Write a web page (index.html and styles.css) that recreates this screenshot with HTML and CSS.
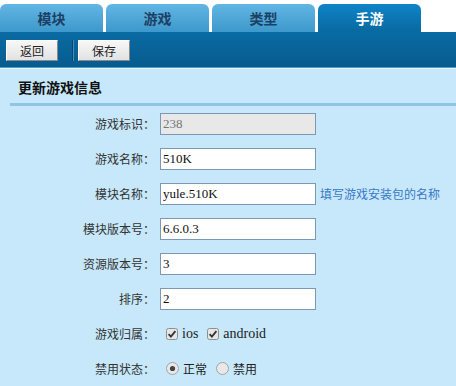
FILE: index.html
```html
<!DOCTYPE html>
<html lang="zh-CN">

<head>
    <meta charset="UTF-8">
    <meta name="viewport" content="width=device-width, initial-scale=1.0">
    <title>更新游戏信息</title>
    <link rel="stylesheet" href="styles.css">
</head>

<body>
    <ul class="tabs">
        <li class="tab">模块</li>
        <li class="tab">游戏</li>
        <li class="tab">类型</li>
        <li class="tab active">手游</li>
    </ul>

    <div class="toolbar">
        <button class="tool-btn">返回</button>
        <span class="tool-sep"></span>
        <button class="tool-btn">保存</button>
    </div>

    <div class="content">
        <h2 class="panel-title">更新游戏信息</h2>

        <form class="game-form">
            <label class="field-label">游戏标识：</label>
            <div class="field"><input class="text-input" type="text" value="238" disabled></div>

            <label class="field-label">游戏名称：</label>
            <div class="field"><input class="text-input" type="text" value="510K"></div>

            <label class="field-label">模块名称：</label>
            <div class="field">
                <input class="text-input" type="text" value="yule.510K">
                <span class="hint">填写游戏安装包的名称</span>
            </div>

            <label class="field-label">模块版本号：</label>
            <div class="field"><input class="text-input" type="text" value="6.6.0.3"></div>

            <label class="field-label">资源版本号：</label>
            <div class="field"><input class="text-input" type="text" value="3"></div>

            <label class="field-label">排序：</label>
            <div class="field"><input class="text-input" type="text" value="2"></div>

            <label class="field-label">游戏归属：</label>
            <div class="field choices">
                <span class="choice">
                    <svg class="box" width="12" height="12" viewBox="0 0 12 12">
                        <rect x="0.5" y="0.5" width="11" height="11" rx="2" fill="#e6e6e6" stroke="#8f8f8f" />
                        <path d="M2.6 6.2 L4.9 8.6 L9.4 3.2" fill="none" stroke="#333" stroke-width="1.8" />
                    </svg>
                    ios
                </span>
                <span class="choice">
                    <svg class="box" width="12" height="12" viewBox="0 0 12 12">
                        <rect x="0.5" y="0.5" width="11" height="11" rx="2" fill="#e6e6e6" stroke="#8f8f8f" />
                        <path d="M2.6 6.2 L4.9 8.6 L9.4 3.2" fill="none" stroke="#333" stroke-width="1.8" />
                    </svg>
                    android
                </span>
            </div>

            <label class="field-label">禁用状态：</label>
            <div class="field choices">
                <span class="choice">
                    <svg class="box" width="13" height="13" viewBox="0 0 13 13">
                        <circle cx="6.5" cy="6.5" r="6" fill="#e8e8e8" stroke="#a3a3a3" />
                        <circle cx="6.5" cy="6.5" r="2.6" fill="#444" />
                    </svg>
                    <span class="cjk">正常</span>
                </span>
                <span class="choice">
                    <svg class="box" width="13" height="13" viewBox="0 0 13 13">
                        <circle cx="6.5" cy="6.5" r="6" fill="#e8e8e8" stroke="#a3a3a3" />
                    </svg>
                    <span class="cjk">禁用</span>
                </span>
            </div>
        </form>
    </div>
</body>

</html>
```

FILE: styles.css
```css
body {
    margin: 0;
    padding: 0;
    background-color: #fff;
    font-family: "Liberation Serif", "Noto Sans CJK SC", serif;
    height: 386px;
    overflow: hidden;
}

.tabs {
    display: flex;
    gap: 3px;
    list-style: none;
    margin: 0;
    padding: 4px 0 0 0;
    height: 28px;
}

.tab {
    width: 103px;
    height: 28px;
    line-height: 28px;
    text-align: center;
    font-family: "Noto Sans CJK SC", sans-serif;
    font-size: 14px;
    font-weight: bold;
    color: #1d3f63;
    border-radius: 6px 6px 0 0;
    background: linear-gradient(#62b6e4, #3d98cb);
}

.tab.active {
    color: #fff;
    background: linear-gradient(#0d84c8, #09699f);
}

.toolbar {
    display: flex;
    align-items: center;
    height: 35px;
    padding-left: 6px;
    background: linear-gradient(#0a6ba3, #075b8f);
    border-bottom: 1px solid #4f9bc6;
    box-shadow: 0 1px 0 #eaf6fd;
}

.tool-btn {
    height: 21px;
    padding: 0 13px;
    font-family: "Noto Sans CJK SC", sans-serif;
    font-size: 12px;
    line-height: 19px;
    color: #222;
    background: linear-gradient(#f7f7f7, #e2e2e2);
    border: 1px solid;
    border-color: #fff #8a8a8a #8a8a8a #fff;
    border-radius: 0;
    margin-top: 2px;
}

.tool-sep {
    width: 1px;
    height: 21px;
    margin: 2px 5px 0 14px;
    background-color: #0b4670;
    box-shadow: 1px 0 0 #3d8fc0;
}

.content {
    margin-top: 1px;
    background-color: #c6e8fa;
    height: 317px;
}

.panel-title {
    margin: 0 0 0 10px;
    padding: 0 0 0 8px;
    height: 34px;
    line-height: 36px;
    font-family: "Noto Sans CJK SC", sans-serif;
    font-size: 14px;
    font-weight: bold;
    color: #111;
    border-bottom: 3px solid #8fc5e1;
}

.game-form {
    display: grid;
    grid-template-columns: 155px 1fr;
    grid-auto-rows: 35px;
    column-gap: 5px;
    align-items: center;
}

.field-label {
    text-align: right;
    font-family: "Noto Sans CJK SC", sans-serif;
    font-size: 12px;
    color: #333;
}

.field {
    display: flex;
    align-items: center;
}

.text-input {
    box-sizing: border-box;
    width: 156px;
    height: 22px;
    padding: 0 2px;
    font-family: "Liberation Serif", serif;
    font-size: 13px;
    color: #111;
    background: #fff;
    border: 1px solid #7d98b5;
    border-radius: 0;
}

.text-input:disabled {
    background: #e8e8e8;
    color: #777;
}

.hint {
    margin-left: 4px;
    font-family: "Noto Sans CJK SC", sans-serif;
    font-size: 12px;
    color: #3a78c6;
}

.choices {
    gap: 9px;
    padding-left: 6px;
}

.choice {
    display: flex;
    align-items: center;
    gap: 4px;
    font-size: 14px;
    color: #222;
}

.choice .cjk {
    font-family: "Noto Sans CJK SC", sans-serif;
    font-size: 12px;
}
```
